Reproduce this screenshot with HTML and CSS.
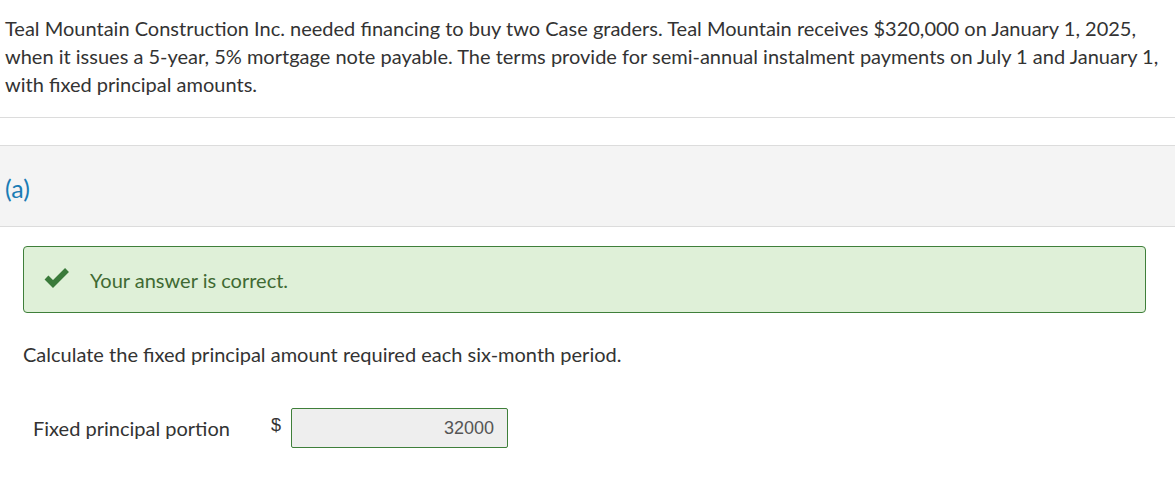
FILE: index.html
```html
<!DOCTYPE html>
<html>
<head>
<meta charset="utf-8">
<link rel="stylesheet" href="styles.css">
</head>
<body>
<div class="question">
  <p class="intro">Teal Mountain Construction Inc. needed financing to buy two Case graders. Teal Mountain receives $320,000 on January 1, 2025, when it issues a 5-year, 5% mortgage note payable. The terms provide for semi-annual instalment payments on July 1 and January 1, with fixed principal amounts.</p>
  <hr class="divider">
  <div class="part-head"><span class="part-label">(a)</span></div>
  <div class="part-body">
    <div class="feedback">
      <svg class="check" viewBox="0 0 26 20" width="26" height="20" aria-hidden="true">
        <polyline points="2.5,9.5 9,16 23,2" fill="none" stroke="#3a7a3a" stroke-width="5.5" stroke-linejoin="miter" stroke-linecap="butt"/>
      </svg>
      <span class="feedback-text">Your answer is correct.</span>
    </div>
    <p class="prompt">Calculate the fixed principal amount required each six-month period.</p>
    <div class="answer-row">
      <span class="answer-label">Fixed principal portion</span>
      <span class="currency">$</span>
      <div class="answer-input">32000</div>
    </div>
  </div>
</div>
</body>
</html>
```

FILE: styles.css
```css
html, body {
  margin: 0;
  padding: 0;
  background: #ffffff;
}

body {
  font-family: Lato, "Open Sans", "Liberation Sans", sans-serif;
  color: #333333;
  font-size: 20px;
}

.intro {
  margin: 0;
  padding: 14px 5px 0 5px;
  line-height: 28px;
}

.divider {
  border: 0;
  border-top: 1px solid #dcdcdc;
  margin: 19px 0 0 0;
  height: 0;
}

.part-head {
  margin-top: 27px;
  background: #f4f4f4;
  border-top: 1px solid #dcdcdc;
  border-bottom: 1px solid #dcdcdc;
  height: 80px;
  display: flex;
  align-items: center;
  padding: 0 5px;
}

.part-label {
  color: #1a7cb5;
  font-size: 25px;
  margin-top: 3px;
}

.part-body {
  padding: 19px 29px 0 23px;
}

.feedback {
  display: flex;
  align-items: center;
  height: 65px;
  background: #dff0d8;
  border: 1px solid #3f7f3a;
  border-radius: 4px;
  padding-left: 20px;
}

.check {
  flex: none;
  margin-top: -4px;
}

.feedback-text {
  margin-left: 20px;
  color: #3f6a33;
}

.prompt {
  margin: 29px 0 0 0;
  line-height: 24px;
}

.answer-row {
  display: flex;
  align-items: center;
  margin-top: 42px;
  padding-left: 10px;
}

.answer-label {
  width: 238px;
}

.currency {
  font-family: "Liberation Sans", Arial, sans-serif;
  font-size: 18px;
  color: #333;
  width: 20px;
  margin-top: -6px;
}

.answer-input {
  box-sizing: border-box;
  width: 217px;
  height: 40px;
  border: 1px solid #3f7f3a;
  border-radius: 2px;
  background: #eeeeee;
  font-family: "Liberation Sans", Arial, sans-serif;
  font-size: 18px;
  color: #555555;
  display: flex;
  align-items: center;
  justify-content: flex-end;
  padding-right: 13px;
}
```
